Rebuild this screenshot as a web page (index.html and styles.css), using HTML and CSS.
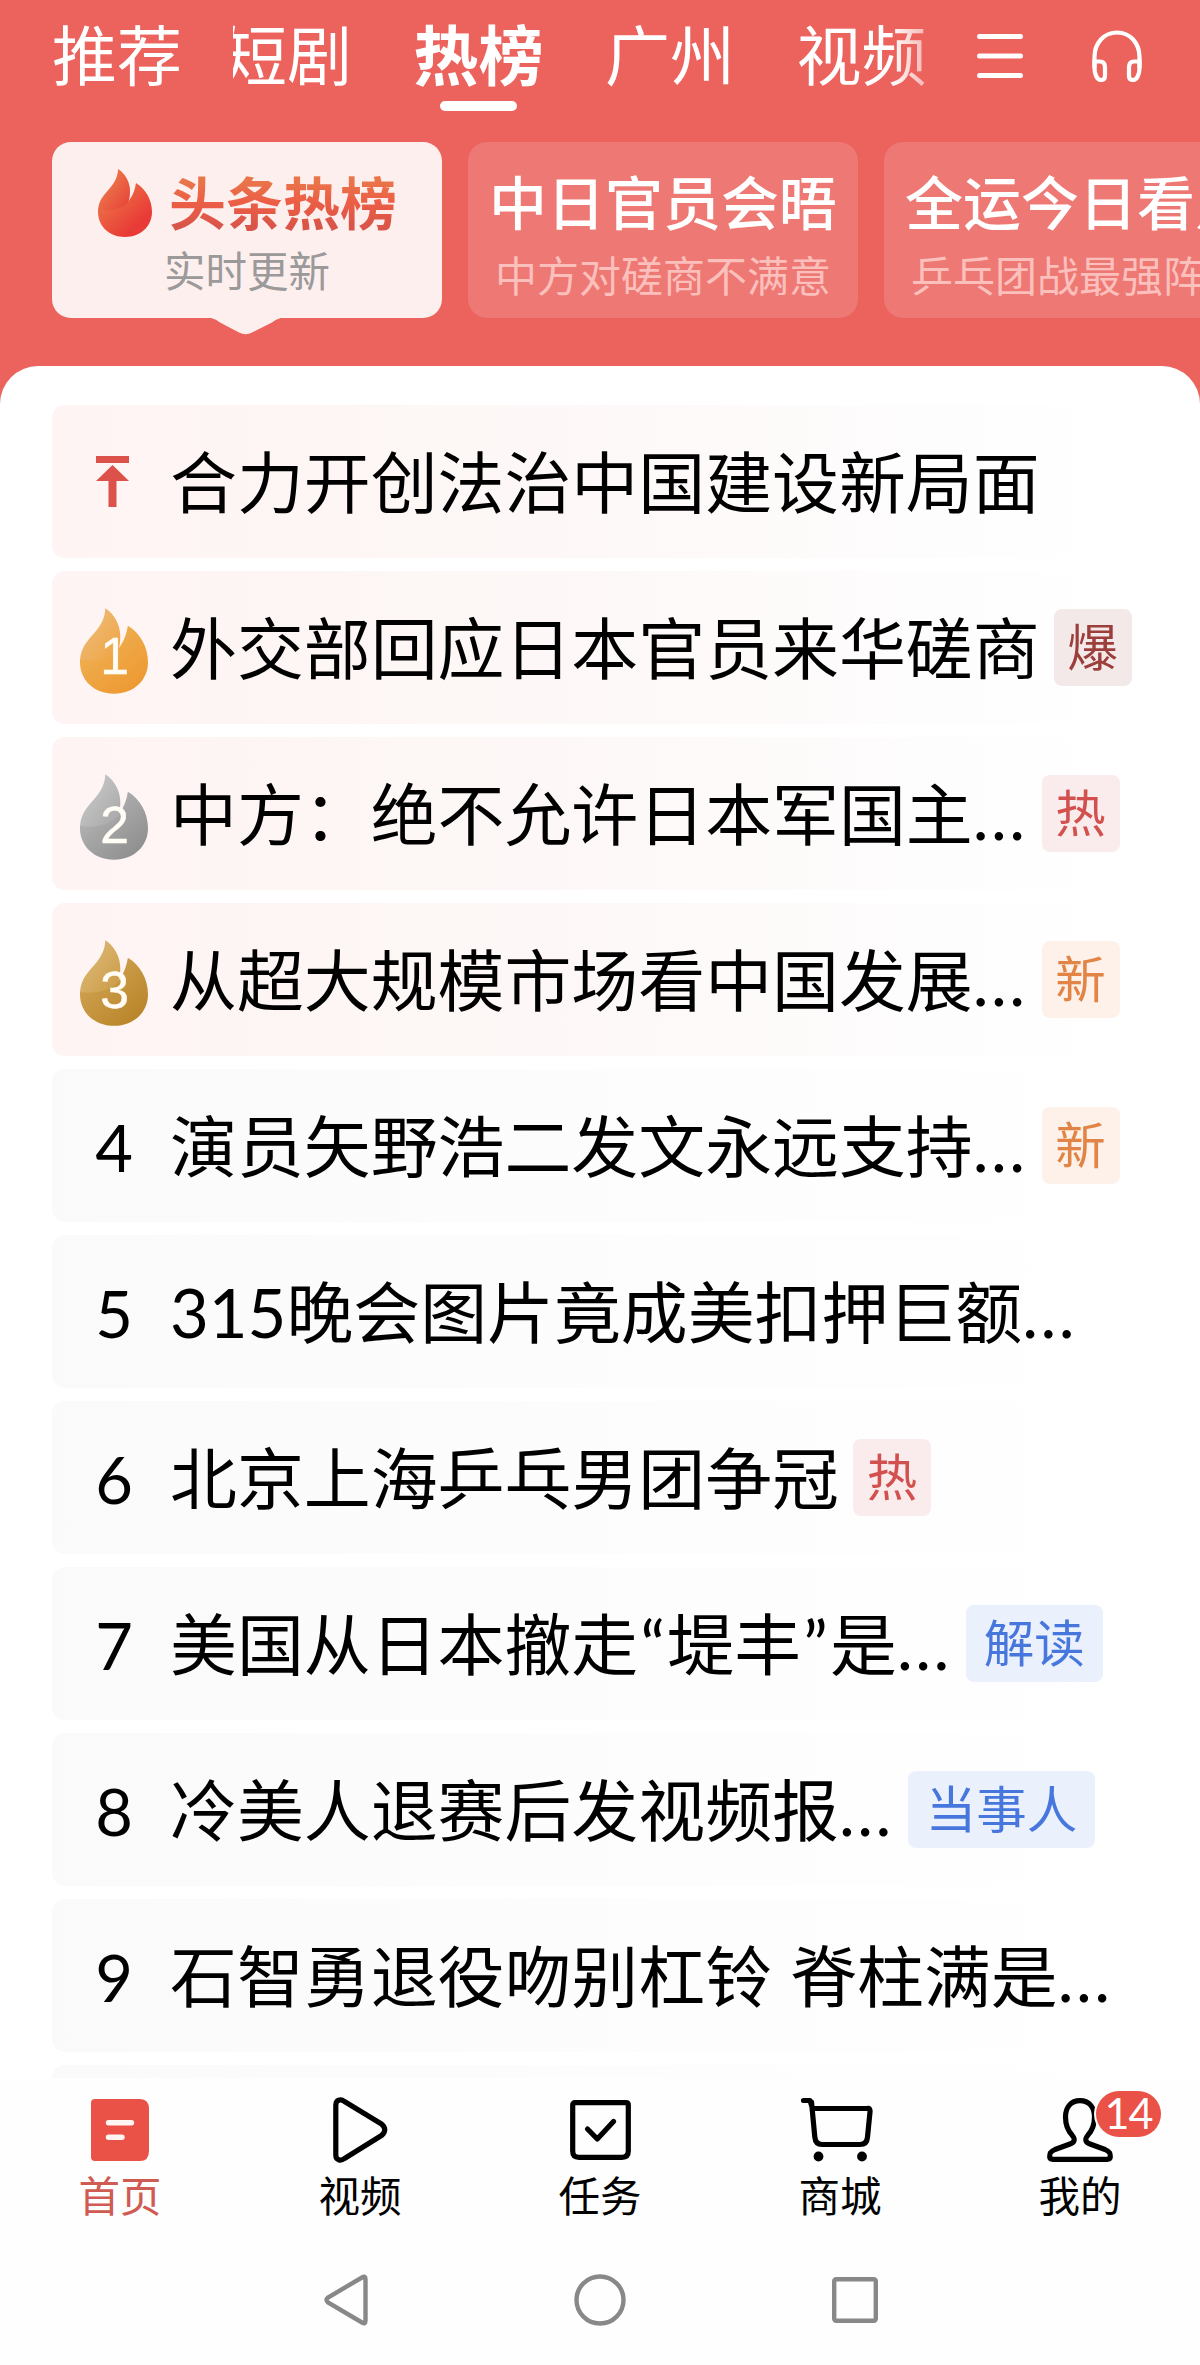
FILE: index.html
```html
<!DOCTYPE html>
<html lang="zh-CN">
<head>
<meta charset="utf-8">
<title>头条热榜</title>
<link rel="stylesheet" href="styles.css">
</head>
<body>
<svg class="defs" width="0" height="0" aria-hidden="true">
  <defs>
    <linearGradient id="hotA" x1="0" y1="0" x2="1" y2="1"><stop offset="0" stop-color="#ef8a50"/><stop offset="1" stop-color="#e63f38"/></linearGradient>
    <linearGradient id="hotB" x1="0" y1="0" x2="0.9" y2="1"><stop offset="0.1" stop-color="#ee7a48"/><stop offset="0.8" stop-color="#e83a36"/></linearGradient>
    <linearGradient id="goldA" x1="0" y1="0" x2="1" y2="1"><stop offset="0" stop-color="#eec083"/><stop offset="1" stop-color="#efa340"/></linearGradient>
    <linearGradient id="goldB" x1="0" y1="0" x2="0.8" y2="1"><stop offset="0" stop-color="#efb65c"/><stop offset="1" stop-color="#ee9830"/></linearGradient>
    <linearGradient id="silverA" x1="0" y1="0" x2="1" y2="1"><stop offset="0" stop-color="#cfcfcf"/><stop offset="1" stop-color="#a6a6a6"/></linearGradient>
    <linearGradient id="silverB" x1="0" y1="0" x2="0.9" y2="1"><stop offset="0" stop-color="#bdbdbd"/><stop offset="1" stop-color="#8b8b8b"/></linearGradient>
    <linearGradient id="bronzeA" x1="0" y1="0" x2="1" y2="1"><stop offset="0" stop-color="#dfbd7e"/><stop offset="1" stop-color="#cb9b45"/></linearGradient>
    <linearGradient id="bronzeB" x1="0" y1="0" x2="0.9" y2="1"><stop offset="0" stop-color="#d5aa5c"/><stop offset="1" stop-color="#b78225"/></linearGradient>
    <path id="flameBase" d="M38 14C48 20 54 31 54 43C54 57 43 68 27 68C11 68 0 57 0 43V40.500C8 43 26 39 32 30C35.500 25 37 20 38 14Z"/>
    <path id="flameTip" d="M20 0C28 5 32 14 32 22C32 27 31.500 31 29.500 34C23 41 8 43 0 41C1 30 7 25 12 19C17 13 20 7 20 0Z"/>
  </defs>
</svg>
<div class="app">
  <header class="header">
    <nav class="tabs">
      <span class="tab">推荐</span>
      <div class="tab-strip">
        <span class="tab">短剧</span>
        <span class="tab tab-active">热榜</span>
        <span class="tab">广州</span>
        <span class="tab">视频</span>
      </div>
      <svg class="icon-menu" width="46" height="50" viewBox="0 0 46 50"><path d="M2.500 5.500h41M2.500 25h41M2.500 44.500h41"/></svg>
      <svg class="icon-audio" width="50" height="52" viewBox="0 0 50 52"><path d="M2.500 38V27C2.500 13 12 2.500 25 2.500S47.500 13 47.500 27V38"/><path d="M2.500 31.500H8q5 0 5 6V46q0 4-4 4C5 50 2.500 44 2.500 38ZM47.500 31.500H42q-5 0-5 6V46q0 4 4 4C45 50 47.500 44 47.500 38Z"/></svg>
    </nav>
    <div class="cards">
      <div class="card card-active">
        <div class="card-brand">
          <svg width="54" height="68" viewBox="0 0 54 68"><use href="#flameBase" fill="url(#hotB)"/><use href="#flameTip" fill="url(#hotA)"/></svg>
          <span class="brand-name">头条热榜</span>
        </div>
        <div class="card-sub">实时更新</div>
        <svg class="card-arrow" width="82" height="18" viewBox="0 0 82 18"><path d="M0 0C8 1 10 2 16 6L34 15.500Q41 19 47 15.500L66 6C72 2 74 1 82 0Z"/></svg>
      </div>
      <div class="card">
        <div class="card-title">中日官员会晤</div>
        <div class="card-sub">中方对磋商不满意</div>
      </div>
      <div class="card">
        <div class="card-title">全运今日看点</div>
        <div class="card-sub">乒乓团战最强阵容</div>
      </div>
    </div>
  </header>
  <main class="panel">
    <div class="row row-top">
      <span class="rank rank-pin"><svg width="33" height="51" viewBox="0 0 33 51"><path fill="#dc5149" d="M0 0H33V7H0ZM16.500 9L33 25H20.500V51H12.500V25H0Z"/></svg></span>
      <span class="title">合力开创法治中国建设新局面</span>
    </div>
    <div class="row row-top">
      <span class="rank rank-medal"><svg class="medal" width="68" height="86" viewBox="0 0 54 68"><use href="#flameBase" fill="url(#goldB)"/><use href="#flameTip" fill="url(#goldA)"/><text x="27.500" y="52.500">1</text></svg></span>
      <span class="title">外交部回应日本官员来华磋商</span><span class="tag tag-boom">爆</span>
    </div>
    <div class="row row-top">
      <span class="rank rank-medal"><svg class="medal" width="68" height="86" viewBox="0 0 54 68"><use href="#flameBase" fill="url(#silverB)"/><use href="#flameTip" fill="url(#silverA)"/><text x="27.500" y="54.500">2</text></svg></span>
      <span class="title">中方：绝不允许日本军国主<i>...</i></span><span class="tag tag-hot">热</span>
    </div>
    <div class="row row-top">
      <span class="rank rank-medal"><svg class="medal" width="68" height="86" viewBox="0 0 54 68"><use href="#flameBase" fill="url(#bronzeB)"/><use href="#flameTip" fill="url(#bronzeA)"/><text x="27.500" y="53.500">3</text></svg></span>
      <span class="title">从超大规模市场看中国发展<i>...</i></span><span class="tag tag-new">新</span>
    </div>
    <div class="row"><span class="rank">4</span><span class="title">演员矢野浩二发文永远支持<i>...</i></span><span class="tag tag-new">新</span></div>
    <div class="row"><span class="rank">5</span><span class="title">315晚会图片竟成美扣押巨额<i>...</i></span></div>
    <div class="row"><span class="rank">6</span><span class="title">北京上海乒乓男团争冠</span><span class="tag tag-hot">热</span></div>
    <div class="row"><span class="rank">7</span><span class="title">美国从日本撤走<b>“</b>堤丰<b>”</b>是<i>...</i></span><span class="tag tag-info">解读</span></div>
    <div class="row"><span class="rank">8</span><span class="title">冷美人退赛后发视频报<i>...</i></span><span class="tag tag-info">当事人</span></div>
    <div class="row"><span class="rank">9</span><span class="title">石智勇退役吻别杠铃 脊柱满是<i>...</i></span></div>
    <div class="row"></div>
  </main>
  <nav class="tabbar">
    <div class="item item-active">
      <svg width="58" height="62" viewBox="0 0 58 62"><path fill="#ea5147" d="M4 0H49Q58 0 58 10V52Q58 62 49 62H4Q0 62 0 58V4Q0 0 4 0Z"/><path d="M17.500 23.700H40.500M17.500 38.200H31" stroke="#fff5f3" stroke-width="5.400" stroke-linecap="round"/></svg>
      <span>首页</span>
    </div>
    <div class="item">
      <svg width="55" height="66" viewBox="0 0 55 66"><path class="line" d="M2.800 8C2.800 3 7.500 1.500 11.500 4.500L48.500 27Q55 32.500 48.500 38.500L11.500 61.500C7.500 64.500 2.800 63 2.800 58Z"/></svg>
      <span>视频</span>
    </div>
    <div class="item">
      <svg width="61" height="60" viewBox="0 0 61 60"><path class="line" d="M5 2.700H56Q58.300 2.700 58.300 5V51Q58.300 57.300 52 57.300H9Q2.700 57.300 2.700 51V5Q2.700 2.700 5 2.700Z"/><path class="line" d="M17.500 29L27.300 39L43.500 21.500"/></svg>
      <span>任务</span>
    </div>
    <div class="item">
      <svg width="78" height="64" viewBox="0 0 78 64"><path class="line" d="M2.500 2.500H9L11.500 10.500H66Q69.500 9.500 69 14L66.500 39Q66 46.500 59 46.500H21Q14.500 46.500 13.800 39L10.500 4"/><circle cx="17.500" cy="58.500" r="4.900"/><circle cx="61" cy="58.500" r="4.900"/></svg>
      <span>商城</span>
    </div>
    <div class="item item-me">
      <svg width="66" height="64" viewBox="0 0 66 64"><path class="line" d="M33 2.700C24 2.700 18.500 9 18.500 19C18.500 27 20.500 32 25 37C29 42 27 44.500 23 46L8 51.500C3 54 2.700 55 2.700 58.500Q2.700 61.300 6 61.300H60Q63.300 61.300 63.300 58.500C63.300 55 63 54 58 51.500L43 46C39 44.500 37 42 41 37C45.500 32 47.500 27 47.500 19C47.500 9 42 2.700 33 2.700Z"/></svg>
      <em class="count">14</em>
      <span>我的</span>
    </div>
  </nav>
  <footer class="system">
    <svg width="44" height="52" viewBox="0 0 44 52"><path d="M38 3.500Q41.500 1.500 41.500 5V47Q41.500 50.500 38 48.500L4 28.500Q1 26 4 23.500Z"/></svg>
    <svg width="52" height="52" viewBox="0 0 52 52"><circle cx="26" cy="26" r="23.500"/></svg>
    <svg width="46" height="46" viewBox="0 0 46 46"><rect x="2.200" y="2.200" width="41.600" height="41.600" rx="2"/></svg>
  </footer>
</div>
</body>
</html>
```
FILE: styles.css
```css
* { box-sizing: border-box; }
body {
  margin: 0;
  background: #fefefe;
  font-family: Lato, "Noto Sans CJK SC", sans-serif;
  color: #000;
}
svg { display: block; flex: none; }
.defs { position: absolute; }
.app {
  width: 1200px;
  height: 2365px;
  overflow: hidden;
  display: flex;
  flex-direction: column;
  background: #ec625d;
}

/* header */
.header { height: 366px; flex: none; overflow: hidden; }
.tabs {
  height: 142px;
  padding-left: 52px;
  display: flex;
  align-items: flex-start;
  color: #fff;
}
.tab {
  flex: none;
  width: 130px;
  height: 112px;
  font-size: 65px;
  line-height: 110px;
  white-space: nowrap;
}
.tab-strip {
  display: flex;
  gap: 61.500px;
  width: 692px;
  margin-left: 51px;
  overflow: hidden;
  mask-image: linear-gradient(90deg, #000 calc(100% - 34px), rgba(0, 0, 0, 0.55));
}
.tab-strip .tab:first-child { margin-left: -11px; }
.tab-active {
  font-weight: 700;
  display: flex;
  flex-direction: column;
  align-items: center;
}
.tab-active::after {
  content: "";
  width: 77px;
  height: 10px;
  margin-top: -9px;
  flex: none;
  border-radius: 5px;
  background: #fff;
}
.icon-menu { margin: 31px 0 0 52px; stroke: #fff; stroke-width: 5; stroke-linecap: round; }
.icon-audio { margin: 30px 0 0 69px; fill: none; stroke: #fff; stroke-width: 4.200; }

.cards { display: flex; gap: 26px; padding-left: 52px; }
.card {
  position: relative;
  flex: none;
  width: 390px;
  height: 176px;
  padding: 26px 0 0 21px;
  border-radius: 19px;
  background: #ee7873;
  color: #fff;
  white-space: nowrap;
}
.card-title { font-size: 58px; font-weight: 500; line-height: 70px; }
.card-sub { padding-left: 6px; margin-top: 10px; font-size: 42px; line-height: 56px; color: #fbbfbc; }
.card-active { padding: 26px 0 0; background: #fdefed; }
.card-active .card-sub { padding: 0; margin-top: 5px; font-size: 41.500px; text-align: center; color: #9b9999; }
.card-brand { display: flex; align-items: center; gap: 17px; padding-left: 46px; height: 70px; }
.brand-name {
  font-size: 57px;
  font-weight: 700;
  line-height: 76px;
  background: linear-gradient(#e9764a 20%, #ec5d45 50%, #d95549 80%);
  background-clip: text;
  -webkit-background-clip: text;
  color: transparent;
}
.card-arrow { position: absolute; left: 153px; top: 175px; fill: #fdefed; }

/* ranking list */
.panel {
  height: 1712px;
  flex: none;
  overflow: hidden;
  padding: 39px 52px 0;
  display: flex;
  flex-direction: column;
  gap: 13px;
  border-radius: 38px 38px 0 0;
  background: #fff;
}
.row {
  flex: none;
  height: 153px;
  display: flex;
  align-items: center;
  border-radius: 13px;
  background: linear-gradient(90deg, #fafafa, #fcfcfc 35%, #fefefe 80%, #fff);
}
.row-top { background: linear-gradient(90deg, #fef4f3, #fdf6f5 25%, #fdf9f8 55%, #fefdfd 80%, #fff 98%); }
.rank {
  width: 124px;
  margin-right: -6px;
  display: flex;
  justify-content: center;
  font-size: 65px;
  line-height: 96px;
  padding-top: 2px;
}
.rank-pin { padding: 0 3px 0 0; }
.rank-medal { padding: 7px 1px 0 0; }
.medal text {
  font-family: "Liberation Sans", sans-serif;
  font-size: 41px;
  fill: #fffdf5;
  stroke: #fffdf5;
  stroke-width: 0.400;
  text-anchor: middle;
}
.title {
  font-size: 66.900px;
  line-height: 96px;
  white-space: nowrap;
  word-spacing: 1px;
}
.title i { font-style: normal; letter-spacing: 2.500px; }
.title b { font-weight: 400; display: inline-block; width: 29px; text-align: center; }
.tag {
  width: 78px;
  height: 77px;
  margin-left: 14px;
  border-radius: 8px;
  font-size: 50.500px;
  line-height: 75px;
  text-align: center;
  white-space: nowrap;
}
.tag-boom { background: #f4e9e9; color: #9c3f3c; }
.tag-hot { background: #faebec; color: #d2514e; }
.tag-new { background: #fdf1e9; color: #e18446; }
.tag-info { width: auto; padding: 0 18px; background: #eaf0fc; color: #4777dd; }

/* bottom navigation */
.tabbar {
  height: 162px;
  flex: none;
  display: flex;
  background: #fefefe;
}
.item {
  position: relative;
  flex: 1;
  display: flex;
  flex-direction: column;
  align-items: center;
  font-size: 41.500px;
  line-height: 56px;
}
.item svg { height: 66px; margin: 19px 0 5px; }
.item-active { color: #cf5b53; }
.line { fill: none; stroke: #000; stroke-width: 5.200; stroke-linejoin: round; stroke-linecap: round; }
.count {
  position: absolute;
  left: 136px;
  top: 13px;
  width: 65px;
  height: 46px;
  border-radius: 23px;
  background: #ea5147;
  box-shadow: 0 0 0 2px #fff;
  color: #fff;
  font-style: normal;
  font-size: 43px;
  line-height: 43px;
  letter-spacing: -1px;
  text-align: center;
}
.system {
  flex: 1;
  display: flex;
  justify-content: center;
  align-items: center;
  gap: 206px;
  padding: 0 0 5px 1px;
  background: #fefefe;
}
.system svg { fill: none; stroke: #888; stroke-width: 4.400; }
```
